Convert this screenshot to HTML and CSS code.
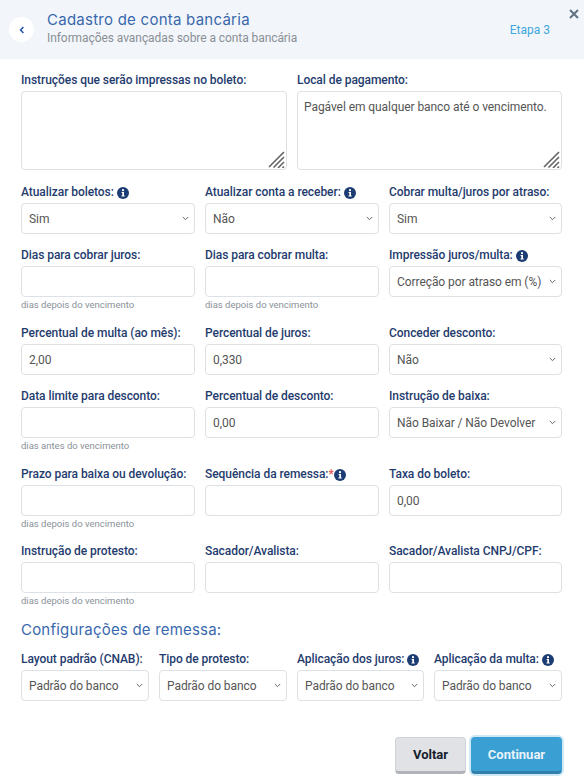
FILE: index.html
```html
<!DOCTYPE html>
<html lang="en">
<head>
    <meta charset="UTF-8">
    <meta name="viewport" content="width=device-width, initial-scale=1.0">
    <title>Cadastro de conta bancária</title>
    <link rel="stylesheet" href="styles.css">
</head>
<body>
    <svg class="sprite" width="0" height="0">
        <symbol id="info" viewBox="0 0 12 12">
            <circle cx="6" cy="6" r="6" fill="#1c3d73"/>
            <rect x="5" y="2.2" width="2" height="1.9" fill="#fff"/>
            <path d="M4.6 5h2.4v3.6h.7v1H4.5v-1h.8V6h-.7z" fill="#fff"/>
        </symbol>
    </svg>

    <header class="top">
        <button class="back" type="button">
            <svg width="6" height="8" viewBox="0 0 6 8"><path d="M4.4 1 1.6 4l2.8 3" fill="none" stroke="#2b5aa8" stroke-width="1.6"/></svg>
        </button>
        <div class="top-text">
            <h1>Cadastro de conta bancária</h1>
            <p>Informações avançadas sobre a conta bancária</p>
        </div>
        <span class="step">Etapa 3</span>
        <svg class="close" width="10" height="10" viewBox="0 0 10 10"><path d="M1 1l8 8M9 1 1 9" stroke="#5f7384" stroke-width="2"/></svg>
    </header>

    <form class="content">
        <div class="row cols-2 row-text">
            <div class="field">
                <label>Instruções que serão impressas no boleto:</label>
                <textarea></textarea>
            </div>
            <div class="field">
                <label>Local de pagamento:</label>
                <textarea>Pagável em qualquer banco até o vencimento.</textarea>
            </div>
        </div>

        <div class="row cols-3 row-a">
            <div class="field">
                <label>Atualizar boletos: <svg class="info"><use href="#info"/></svg></label>
                <select><option>Sim</option></select>
            </div>
            <div class="field">
                <label>Atualizar conta a receber: <svg class="info"><use href="#info"/></svg></label>
                <select><option>Não</option></select>
            </div>
            <div class="field">
                <label>Cobrar multa/juros por atraso:</label>
                <select><option>Sim</option></select>
            </div>
        </div>

        <div class="row cols-3 row-b">
            <div class="field">
                <label>Dias para cobrar juros:</label>
                <input type="text">
                <small>dias depois do vencimento</small>
            </div>
            <div class="field">
                <label>Dias para cobrar multa:</label>
                <input type="text">
                <small>dias depois do vencimento</small>
            </div>
            <div class="field">
                <label>Impressão juros/multa: <svg class="info"><use href="#info"/></svg></label>
                <select><option>Correção por atraso em (%)</option></select>
            </div>
        </div>

        <div class="row cols-3 row-c">
            <div class="field">
                <label>Percentual de multa (ao mês):</label>
                <input type="text" value="2,00">
            </div>
            <div class="field">
                <label>Percentual de juros:</label>
                <input type="text" value="0,330">
            </div>
            <div class="field">
                <label>Conceder desconto:</label>
                <select><option>Não</option></select>
            </div>
        </div>

        <div class="row cols-3 row-d">
            <div class="field">
                <label>Data limite para desconto:</label>
                <input type="text">
                <small>dias antes do vencimento</small>
            </div>
            <div class="field">
                <label>Percentual de desconto:</label>
                <input type="text" value="0,00">
            </div>
            <div class="field">
                <label>Instrução de baixa:</label>
                <select><option>Não Baixar / Não Devolver</option></select>
            </div>
        </div>

        <div class="row cols-3 row-e">
            <div class="field">
                <label>Prazo para baixa ou devolução:</label>
                <input type="text">
                <small>dias depois do vencimento</small>
            </div>
            <div class="field">
                <label>Sequência da remessa:<span class="req">*</span><svg class="info"><use href="#info"/></svg></label>
                <input type="text">
            </div>
            <div class="field">
                <label>Taxa do boleto:</label>
                <input type="text" value="0,00">
            </div>
        </div>

        <div class="row cols-3 row-f">
            <div class="field">
                <label>Instrução de protesto:</label>
                <input type="text">
                <small>dias depois do vencimento</small>
            </div>
            <div class="field">
                <label>Sacador/Avalista:</label>
                <input type="text">
            </div>
            <div class="field">
                <label>Sacador/Avalista CNPJ/CPF:</label>
                <input type="text">
            </div>
        </div>

        <h2>Configurações de remessa:</h2>

        <div class="row cols-4">
            <div class="field">
                <label>Layout padrão (CNAB):</label>
                <select><option>Padrão do banco</option></select>
            </div>
            <div class="field">
                <label>Tipo de protesto:</label>
                <select><option>Padrão do banco</option></select>
            </div>
            <div class="field">
                <label>Aplicação dos juros: <svg class="info"><use href="#info"/></svg></label>
                <select><option>Padrão do banco</option></select>
            </div>
            <div class="field">
                <label>Aplicação da multa: <svg class="info"><use href="#info"/></svg></label>
                <select><option>Padrão do banco</option></select>
            </div>
        </div>

        <div class="actions">
            <button class="btn btn-back" type="button">Voltar</button>
            <button class="btn btn-next" type="button">Continuar</button>
        </div>
    </form>
</body>
</html>
```

FILE: styles.css
```css
* {
    box-sizing: border-box;
}
html, body {
    margin: 0;
    height: 778px;
    overflow: hidden;
}
body {
    font-family: Roboto, sans-serif;
    font-size: 12px;
    background-color: #fff;
    color: #555;
}
.sprite {
    position: absolute;
}

.top {
    position: relative;
    display: flex;
    align-items: center;
    height: 59px;
    padding: 0 34px 0 9px;
    background-color: #f2f6fa;
}
.back {
    display: flex;
    align-items: center;
    justify-content: center;
    width: 25px;
    height: 25px;
    padding: 0;
    border: 0;
    border-radius: 50%;
    background-color: #fff;
}
.top-text {
    flex: 1;
    margin-left: 13px;
    margin-top: -2px;
}
.top h1 {
    margin: 0;
    font-family: Inter, sans-serif;
    font-size: 15px;
    font-weight: 400;
    letter-spacing: .25px;
    line-height: 18px;
    color: #3a68ad;
}
.top p {
    margin: 1px 0 0;
    font-size: 12px;
    letter-spacing: -.07px;
    line-height: 16px;
    color: #8a8f96;
}
.step {
    font-size: 12px;
    color: #3fa6de;
}
.close {
    position: absolute;
    top: 9px;
    right: 5px;
}

.content {
    padding: 14px 22px 0 21px;
}
.row {
    display: grid;
    column-gap: 10px;
}
.cols-2 {
    grid-template-columns: 266px 265px;
}
.cols-3 {
    grid-template-columns: 174px 174px 173px;
}
.cols-4 {
    grid-template-columns: 128px 128px 127px 128px;
}
.row-a { margin-top: 15px; }
.row-b { margin-top: 14px; }
.row-c { margin-top: 14px; }
.row-d { margin-top: 14px; }
.row-e { margin-top: 14px; }
.row-f { margin-top: 13px; }

label {
    display: flex;
    align-items: center;
    height: 15px;
    margin-bottom: 3px;
    font-size: 12px;
    font-weight: 500;
    letter-spacing: -.06px;
    line-height: 15px;
    color: #1f3c6e;
    white-space: pre;
}
.info {
    flex: none;
    width: 12px;
    height: 12px;
}
.req {
    color: #e2574c;
}

input, select, textarea {
    display: block;
    width: 100%;
    height: 31px;
    padding: 0 7px;
    border: 1px solid #dde0e4;
    border-radius: 4px;
    background-color: #fff;
    font-family: Roboto, sans-serif;
    font-size: 12px;
    letter-spacing: -.07px;
    color: #555;
}
select {
    padding-right: 16px;
    appearance: none;
    background-image: url("data:image/svg+xml,%3Csvg xmlns='http://www.w3.org/2000/svg' width='7' height='5' viewBox='0 0 7 5'%3E%3Cpath d='M.8 1l2.7 2.7L6.2 1' fill='none' stroke='%23666' stroke-width='1'/%3E%3C/svg%3E");
    background-repeat: no-repeat;
    background-position: right 5px center;
}
textarea {
    height: 79px;
    padding: 7px 6px;
    line-height: 17px;
    resize: none;
    background-image: url("data:image/svg+xml,%3Csvg xmlns='http://www.w3.org/2000/svg' width='17' height='17' viewBox='0 0 17 17'%3E%3Cpath d='M1 16 16 1M5.5 16.5 16 6M10 17l6-6M14.5 17l1.5-1.5' fill='none' stroke='%23666' stroke-width='1.6'/%3E%3C/svg%3E");
    background-repeat: no-repeat;
    background-position: right 1px bottom 1px;
}
small {
    display: block;
    height: 14px;
    margin-top: 1px;
    font-size: 9.5px;
    line-height: 13px;
    color: #8a9299;
}

h2 {
    margin: 13px 0 13px;
    font-family: Inter, sans-serif;
    font-size: 15px;
    font-weight: 400;
    letter-spacing: .2px;
    line-height: 18px;
    color: #3a68ad;
}

.actions {
    display: flex;
    justify-content: flex-end;
    gap: 5px;
    margin-top: 36px;
}
.btn {
    height: 37px;
    border-radius: 4px;
    font-family: Roboto, sans-serif;
    font-size: 13px;
    font-weight: 700;
}
.btn-back {
    width: 71px;
    border: 1px solid #cfd2d6;
    border-bottom: 3px solid #b0b3b8;
    background-color: #e0e2e6;
    color: #15202b;
}
.btn-next {
    width: 91px;
    border: 1px solid #3a9fd3;
    border-bottom: 3px solid #3080ab;
    background-color: #3a9fd3;
    color: #e8f3fa;
    box-shadow: 0 0 0 2px #cfe8f5;
}
```
